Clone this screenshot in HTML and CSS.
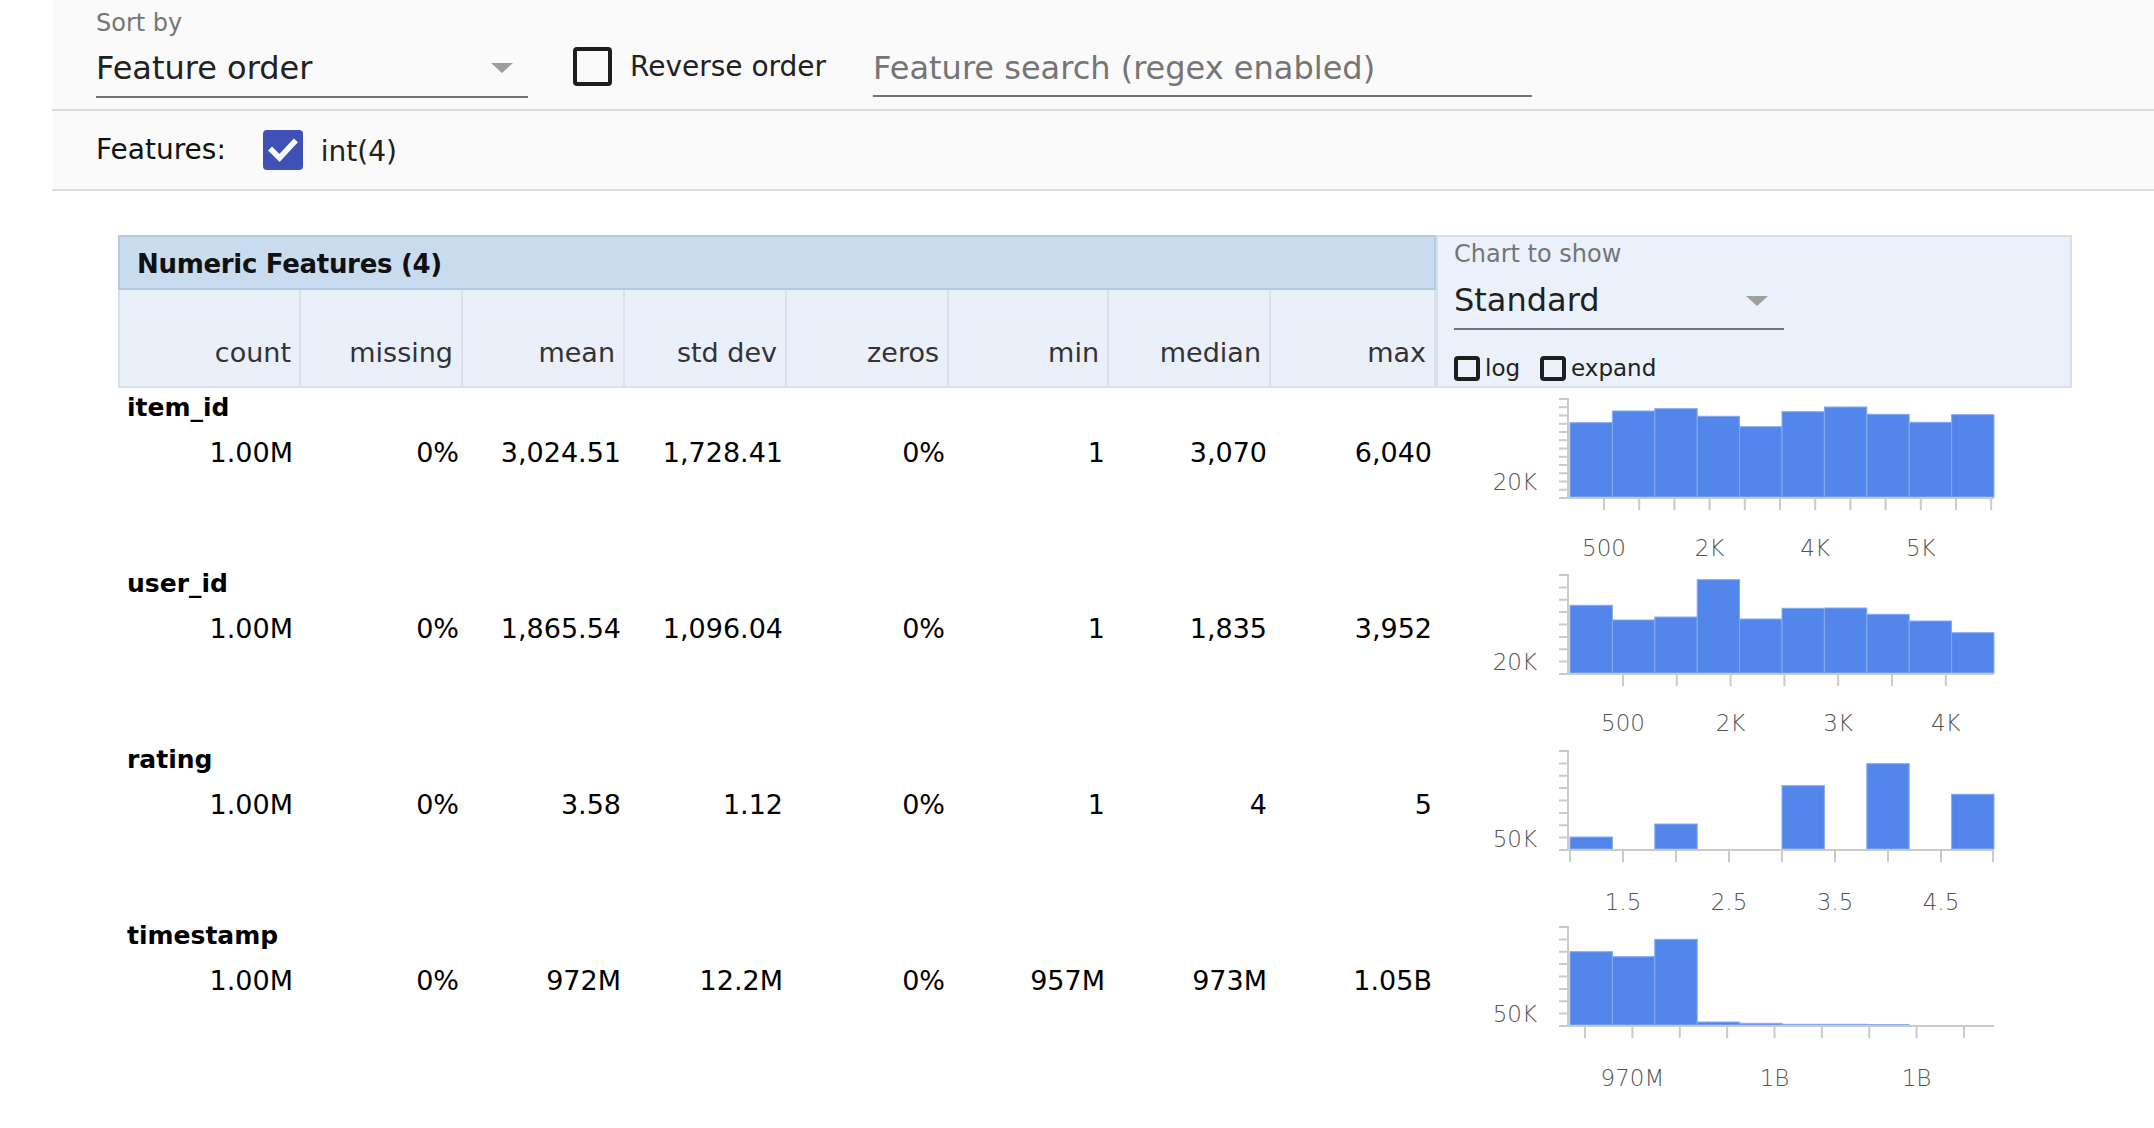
FILE: index.html
```html
<!DOCTYPE html>
<html>
<head>
<meta charset="utf-8">
<link rel="stylesheet" href="styles.css">
</head>
<body>
<div class="app">
  <div class="toolbar">
    <div class="sort-row">
      <div class="sort-dd">
        <div class="dd-label">Sort by</div>
        <div class="dd-value"><span>Feature order</span><span class="dd-arrow"></span></div>
      </div>
      <div class="reverse">
        <span class="box big"></span>
        <span class="reverse-text">Reverse order</span>
      </div>
      <div class="search"><span class="placeholder">Feature search (regex enabled)</span></div>
    </div>
    <div class="feat-row">
      <span class="feat-label">Features:</span>
      <span class="box checked"><svg width="40" height="40" viewBox="0 0 40 40"><path d="M9 20.5 L16.5 28 L31 12.5" fill="none" stroke="#fff" stroke-width="5.5" stroke-linecap="square"/></svg></span>
      <span class="feat-type">int(4)</span>
    </div>
  </div>

  <div class="main">
    <div class="table">
      <div class="thead">
        <div class="title">Numeric Features (4)</div>
        <div class="th first">count</div>
        <div class="th">missing</div>
        <div class="th">mean</div>
        <div class="th">std dev</div>
        <div class="th">zeros</div>
        <div class="th">min</div>
        <div class="th">median</div>
        <div class="th">max</div>
        <div class="chart-head">
          <div class="ch-label">Chart to show</div>
          <div class="ch-value"><span>Standard</span><span class="dd-arrow"></span></div>
          <div class="ch-opts">
            <span class="box small"></span><span class="opt-text">log</span>
            <span class="box small gap"></span><span class="opt-text">expand</span>
          </div>
        </div>
      </div>

      <div class="feature">
        <div class="fname">item_id</div>
        <div class="stat first">1.00M</div>
        <div class="stat">0%</div>
        <div class="stat">3,024.51</div>
        <div class="stat">1,728.41</div>
        <div class="stat">0%</div>
        <div class="stat">1</div>
        <div class="stat">3,070</div>
        <div class="stat">6,040</div>
        <div class="chart">
          <svg width="636" height="176" viewBox="0 0 636 176">
            <g class="bars">
              <rect x="134" y="34.7" width="42.4" height="74.3"/>
              <rect x="176.4" y="23" width="42.4" height="86"/>
              <rect x="218.8" y="20.7" width="42.4" height="88.3"/>
              <rect x="261.2" y="28.3" width="42.4" height="80.7"/>
              <rect x="303.6" y="38.7" width="42.4" height="70.3"/>
              <rect x="346" y="23.7" width="42.4" height="85.3"/>
              <rect x="388.4" y="19" width="42.4" height="90"/>
              <rect x="430.8" y="26.3" width="42.4" height="82.7"/>
              <rect x="473.2" y="34.3" width="42.4" height="74.7"/>
              <rect x="515.6" y="26.7" width="42.4" height="82.3"/>
            </g>
            <g class="axis">
              <line x1="132" y1="10" x2="132" y2="111"/>
              <line x1="123" y1="110" x2="558" y2="110"/>
              <path d="M123 11H132M123 19.25H132M123 27.5H132M123 35.75H132M123 44H132M123 52.25H132M123 60.5H132M123 68.75H132M123 77H132M123 85.25H132M123 93.5H132M123 101.75H132"/>
              <path d="M168 110V122M203.2 110V122M238.4 110V122M273.6 110V122M308.8 110V122M344 110V122M379.2 110V122M414.4 110V122M449.6 110V122M484.8 110V122M520 110V122M555.2 110V122"/>
            </g>
            <text class="ylab" x="101" y="102.4">20K</text>
            <text class="xlab" x="168" y="168.4">500</text>
            <text class="xlab" x="273.6" y="168.4">2K</text>
            <text class="xlab" x="379.2" y="168.4">4K</text>
            <text class="xlab" x="484.8" y="168.4">5K</text>
          </svg>
        </div>
      </div>

      <div class="feature">
        <div class="fname">user_id</div>
        <div class="stat first">1.00M</div>
        <div class="stat">0%</div>
        <div class="stat">1,865.54</div>
        <div class="stat">1,096.04</div>
        <div class="stat">0%</div>
        <div class="stat">1</div>
        <div class="stat">1,835</div>
        <div class="stat">3,952</div>
        <div class="chart">
          <svg width="636" height="176" viewBox="0 0 636 176">
            <g class="bars">
              <rect x="134" y="41.3" width="42.4" height="67.7"/>
              <rect x="176.4" y="56" width="42.4" height="53"/>
              <rect x="218.8" y="53" width="42.4" height="56"/>
              <rect x="261.2" y="15.7" width="42.4" height="93.3"/>
              <rect x="303.6" y="55" width="42.4" height="54"/>
              <rect x="346" y="44.3" width="42.4" height="64.7"/>
              <rect x="388.4" y="44" width="42.4" height="65"/>
              <rect x="430.8" y="50.3" width="42.4" height="58.7"/>
              <rect x="473.2" y="57" width="42.4" height="52"/>
              <rect x="515.6" y="68.7" width="42.4" height="40.3"/>
            </g>
            <g class="axis">
              <line x1="132" y1="10" x2="132" y2="111"/>
              <line x1="123" y1="110" x2="558" y2="110"/>
              <path d="M123 11H132M123 23.4H132M123 35.75H132M123 48.1H132M123 60.5H132M123 72.9H132M123 85.25H132M123 97.6H132"/>
              <path d="M187 110V122M240.8 110V122M294.6 110V122M348.4 110V122M402.2 110V122M456 110V122M509.8 110V122"/>
            </g>
            <text class="ylab" x="101" y="106">20K</text>
            <text class="xlab" x="187" y="167.4">500</text>
            <text class="xlab" x="294.6" y="167.4">2K</text>
            <text class="xlab" x="402.2" y="167.4">3K</text>
            <text class="xlab" x="509.8" y="167.4">4K</text>
          </svg>
        </div>
      </div>

      <div class="feature">
        <div class="fname">rating</div>
        <div class="stat first">1.00M</div>
        <div class="stat">0%</div>
        <div class="stat">3.58</div>
        <div class="stat">1.12</div>
        <div class="stat">0%</div>
        <div class="stat">1</div>
        <div class="stat">4</div>
        <div class="stat">5</div>
        <div class="chart">
          <svg width="636" height="176" viewBox="0 0 636 176">
            <g class="bars">
              <rect x="134" y="97" width="42.4" height="12"/>
              <rect x="218.8" y="84" width="42.4" height="25"/>
              <rect x="346" y="45.7" width="42.4" height="63.3"/>
              <rect x="430.8" y="23.7" width="42.4" height="85.3"/>
              <rect x="515.6" y="54.3" width="42.4" height="54.7"/>
            </g>
            <g class="axis">
              <line x1="132" y1="10" x2="132" y2="111"/>
              <line x1="123" y1="110" x2="558" y2="110"/>
              <path d="M123 11H132M123 23.4H132M123 35.75H132M123 48.1H132M123 60.5H132M123 72.9H132M123 85.25H132M123 97.6H132"/>
              <path d="M134 110V122M187 110V122M240 110V122M293 110V122M346 110V122M399 110V122M452 110V122M505 110V122M557 110V122"/>
            </g>
            <text class="ylab" x="101" y="106.7">50K</text>
            <text class="xlab" x="187" y="170">1.5</text>
            <text class="xlab" x="293" y="170">2.5</text>
            <text class="xlab" x="399" y="170">3.5</text>
            <text class="xlab" x="505" y="170">4.5</text>
          </svg>
        </div>
      </div>

      <div class="feature">
        <div class="fname">timestamp</div>
        <div class="stat first">1.00M</div>
        <div class="stat">0%</div>
        <div class="stat">972M</div>
        <div class="stat">12.2M</div>
        <div class="stat">0%</div>
        <div class="stat">957M</div>
        <div class="stat">973M</div>
        <div class="stat">1.05B</div>
        <div class="chart">
          <svg width="636" height="176" viewBox="0 0 636 176">
            <g class="bars">
              <rect x="134" y="35.7" width="42.4" height="73.3"/>
              <rect x="176.4" y="40.7" width="42.4" height="68.3"/>
              <rect x="218.8" y="23.3" width="42.4" height="85.7"/>
              <rect x="261.2" y="106" width="42.4" height="3"/>
              <rect x="303.6" y="107.3" width="42.4" height="1.7"/>
              <rect x="346" y="108.3" width="42.4" height="0.7"/>
              <rect x="388.4" y="108.3" width="42.4" height="0.7"/>
              <rect x="430.8" y="108.6" width="42.4" height="0.4"/>
            </g>
            <g class="axis">
              <line x1="132" y1="10" x2="132" y2="111"/>
              <line x1="123" y1="110" x2="558" y2="110"/>
              <path d="M123 11H132M123 23.4H132M123 35.75H132M123 48.1H132M123 60.5H132M123 72.9H132M123 85.25H132M123 97.6H132"/>
              <path d="M149 110V122M196.4 110V122M243.8 110V122M291.1 110V122M338.5 110V122M385.9 110V122M433.3 110V122M480.6 110V122M528 110V122"/>
            </g>
            <text class="ylab" x="101" y="106.4">50K</text>
            <text class="xlab" x="196.4" y="170.4">970M</text>
            <text class="xlab" x="338.5" y="170.4">1B</text>
            <text class="xlab" x="480.6" y="170.4">1B</text>
          </svg>
        </div>
      </div>
    </div>
  </div>
</div>
</body>
</html>
```

FILE: styles.css
```css
html, body {
  margin: 0;
  padding: 0;
  background: #ffffff;
}

body {
  font-family: "DejaVu Sans", "Liberation Sans", sans-serif;
  color: #212121;
  width: 2154px;
  height: 1128px;
  overflow: hidden;
}

.app {
  padding-left: 52px;
}

/* ---------- toolbar ---------- */
.toolbar {
  background: #fafafa;
}

.sort-row {
  display: flex;
  align-items: flex-start;
  height: 111px;
  box-sizing: border-box;
  border-bottom: 2px solid #dcdcdc;
  padding-left: 44px;
}

.sort-dd {
  width: 432px;
  padding-top: 9px;
}

.dd-label {
  font-size: 24px;
  line-height: 28px;
  color: #757575;
}

.dd-value {
  margin-top: 11px;
  height: 40px;
  line-height: 40px;
  font-size: 32px;
  color: #212121;
  display: flex;
  align-items: center;
  justify-content: space-between;
  padding-right: 15px;
  padding-bottom: 8px;
  border-bottom: 2px solid #737373;
}

.dd-arrow {
  width: 0;
  height: 0;
  border-left: 11px solid transparent;
  border-right: 11px solid transparent;
  border-top: 10px solid #9e9e9e;
}

.reverse {
  margin-left: 45px;
  margin-top: 47px;
  display: flex;
  align-items: center;
  height: 39px;
}

.box {
  display: inline-block;
  box-sizing: border-box;
  flex: none;
}

.box.big {
  width: 39px;
  height: 39px;
  border: 4px solid #1e1e1e;
  border-radius: 4px;
}

.reverse-text {
  margin-left: 18px;
  font-size: 28px;
  line-height: 32px;
  color: #212121;
}

.search {
  margin-left: 47px;
  width: 659px;
  padding-top: 48px;
  padding-bottom: 7px;
  border-bottom: 2px solid #737373;
  font-size: 32px;
  line-height: 40px;
}

.placeholder {
  color: #757575;
}

.feat-row {
  display: flex;
  align-items: center;
  height: 80px;
  box-sizing: border-box;
  border-bottom: 2px solid #dcdcdc;
  padding-left: 44px;
}

.feat-label {
  font-size: 28px;
  line-height: 32px;
  color: #111;
}

.box.checked {
  margin-left: 37px;
  width: 40px;
  height: 40px;
  border-radius: 4px;
  background: #3f51b5;
}

.box.checked svg {
  display: block;
}

.feat-type {
  margin-left: 18px;
  font-size: 28px;
  line-height: 32px;
  color: #212121;
  position: relative;
  top: 2px;
}

/* ---------- main table ---------- */
.main {
  padding: 44px 0 0 66px;
}

.table {
  width: 1954px;
}

.thead,
.feature {
  display: grid;
  grid-template-columns: 183px 162px 162px 162px 162px 160px 162px 165px 636px;
}

.thead {
  grid-template-rows: 55px 98px;
}

.title {
  grid-column: 1 / 9;
  grid-row: 1;
  box-sizing: border-box;
  background: #c9dcef;
  border: 2px solid #b7c9de;
  padding: 11px 0 0 17px;
  font-size: 26px;
  font-weight: bold;
  letter-spacing: -0.3px;
  line-height: 32px;
  color: #111;
}

.th {
  grid-row: 2;
  box-sizing: border-box;
  background: #e9f0f9;
  border-right: 2px solid #d8e1ec;
  border-bottom: 2px solid #d8e1ec;
  display: flex;
  align-items: flex-end;
  justify-content: flex-end;
  padding: 0 8px 17px 0;
  font-size: 27px;
  line-height: 32px;
  color: #333;
}

.th.first {
  border-left: 2px solid #d8e1ec;
}

.chart-head {
  grid-column: 9;
  grid-row: 1 / 3;
  box-sizing: border-box;
  background: #eaf1fa;
  border: 2px solid #d6e0ec;
  padding: 3px 0 0 16px;
}

.ch-label {
  font-size: 24px;
  line-height: 28px;
  color: #757575;
}

.ch-value {
  width: 330px;
  box-sizing: border-box;
  margin-top: 12px;
  height: 50px;
  line-height: 40px;
  font-size: 32px;
  color: #212121;
  display: flex;
  align-items: flex-start;
  justify-content: space-between;
  padding-right: 16px;
  border-bottom: 2px solid #737373;
}

.ch-value .dd-arrow {
  margin-top: 16px;
}

.ch-opts {
  margin-top: 24px;
  display: flex;
  align-items: center;
  height: 28px;
}

.box.small {
  width: 26px;
  height: 25px;
  border: 4px solid #1e1e1e;
  border-radius: 4px;
}

.box.small.gap {
  margin-left: 20px;
}

.opt-text {
  margin-left: 5px;
  font-size: 23px;
  line-height: 28px;
  color: #212121;
}

/* ---------- feature rows ---------- */
.feature {
  grid-template-rows: auto 1fr;
  height: 176px;
}

.fname {
  grid-column: 1 / 9;
  grid-row: 1;
  padding: 6px 0 0 9px;
  font-size: 25px;
  font-weight: bold;
  line-height: 28px;
  color: #000;
}

.stat {
  grid-row: 2;
  align-self: start;
  margin-top: 15px;
  text-align: right;
  padding-right: 4px;
  font-size: 27px;
  line-height: 32px;
  color: #000;
}

.stat.first {
  padding-right: 8px;
}

.chart {
  grid-column: 9;
  grid-row: 1 / 3;
}

.chart svg {
  display: block;
}

.bars rect {
  fill: #5386ea;
  stroke: #86a9ef;
  stroke-width: 1;
}

.axis line,
.axis path {
  stroke: #cacaca;
  stroke-width: 2;
  fill: none;
}

.ylab,
.xlab {
  font-family: "DejaVu Sans", "Liberation Sans", sans-serif;
  font-size: 23px;
  font-weight: 300;
  fill: #555555;
}

.ylab {
  text-anchor: end;
}

.xlab {
  text-anchor: middle;
}
```
